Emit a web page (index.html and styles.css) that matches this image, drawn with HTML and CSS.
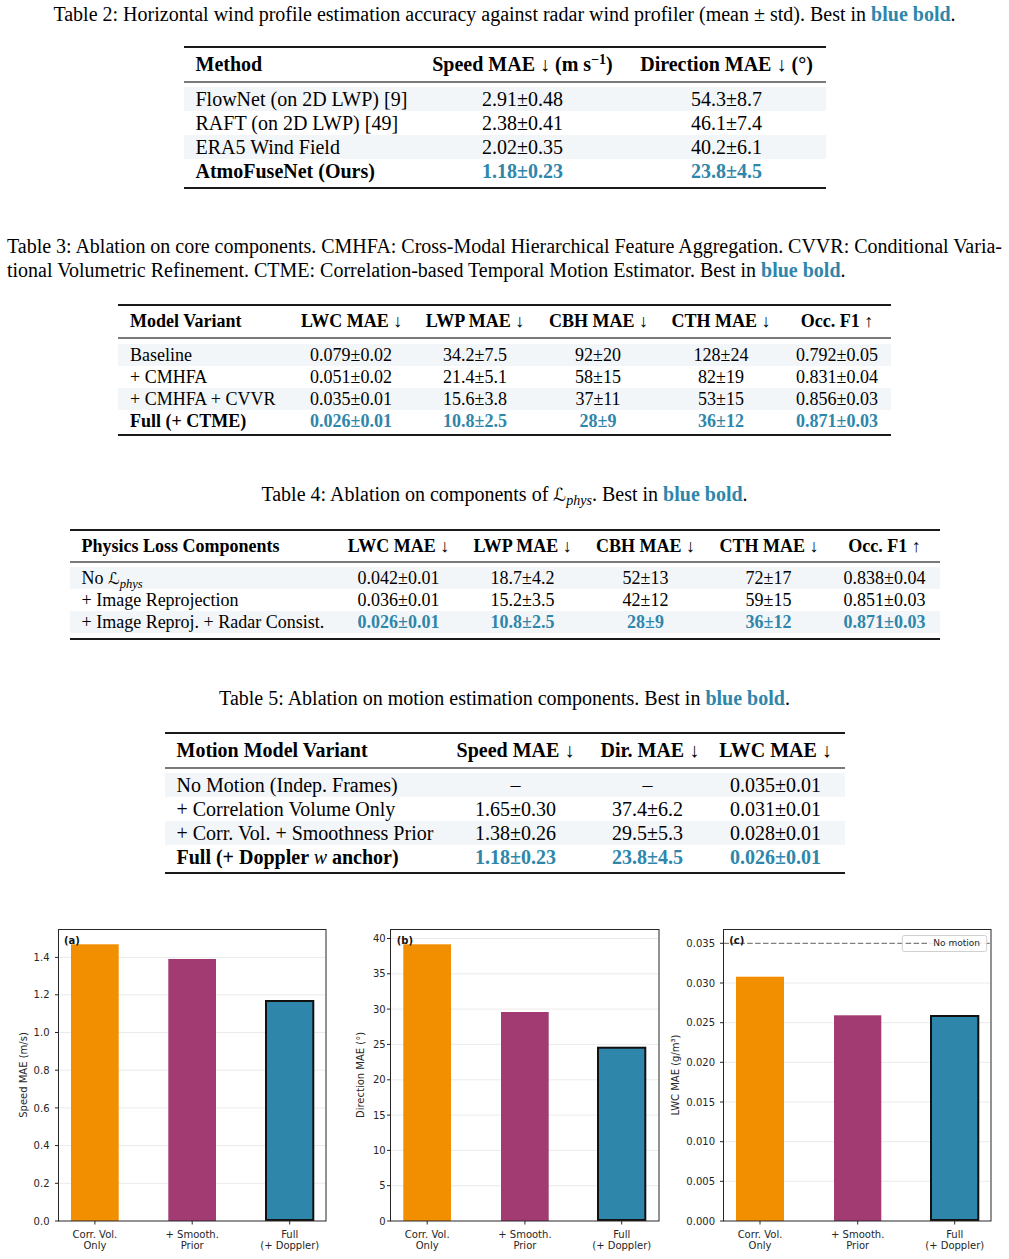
FILE: index.html
```
<!DOCTYPE html>
<html>
	<head>
		<meta charset="utf-8">
		<title>Ablation tables</title>
		<link rel="stylesheet" href="styles.css">
	</head>
	<body>
		<p class="cap center">Table 2: Horizontal wind profile estimation accuracy against radar wind profiler (mean ± std). Best in <b class="blue">blue bold</b>.</p>
		<table class="bt t2">
			<colgroup><col class="w234"><col class="w210"><col class="w198"></colgroup>
			<thead>
				<tr><th>Method</th><th>Speed MAE <span class="ar">↓</span> (m s<sup>−1</sup>)</th><th>Direction MAE <span class="ar">↓</span> (°)</th></tr>
			</thead>
			<tbody>
				<tr><td>FlowNet (on 2D LWP) [9]</td><td>2.91±0.48</td><td>54.3±8.7</td></tr>
				<tr><td>RAFT (on 2D LWP) [49]</td><td>2.38±0.41</td><td>46.1±7.4</td></tr>
				<tr><td>ERA5 Wind Field</td><td>2.02±0.35</td><td>40.2±6.1</td></tr>
				<tr><td><b>AtmoFuseNet (Ours)</b></td><td class="hi">1.18±0.23</td><td class="hi">23.8±4.5</td></tr>
			</tbody>
		</table>

		<p class="cap just c3"><span class="jl">Table 3: Ablation on core components. CMHFA: Cross-Modal Hierarchical Feature Aggregation. CVVR: Conditional Varia-</span>tional Volumetric Refinement. CTME: Correlation-based Temporal Motion Estimator. Best in <b class="blue">blue bold</b>.</p>
		<table class="bt t3">
			<colgroup><col class="w171"><col class="w124"><col class="w124"><col class="w122"><col class="w124"><col class="w108"></colgroup>
			<thead>
				<tr><th>Model Variant</th><th>LWC MAE <span class="ar">↓</span></th><th>LWP MAE <span class="ar">↓</span></th><th>CBH MAE <span class="ar">↓</span></th><th>CTH MAE <span class="ar">↓</span></th><th>Occ. F1 <span class="ar">↑</span></th></tr>
			</thead>
			<tbody>
				<tr><td>Baseline</td><td>0.079±0.02</td><td>34.2±7.5</td><td>92±20</td><td>128±24</td><td>0.792±0.05</td></tr>
				<tr><td>+ CMHFA</td><td>0.051±0.02</td><td>21.4±5.1</td><td>58±15</td><td>82±19</td><td>0.831±0.04</td></tr>
				<tr><td>+ CMHFA + CVVR</td><td>0.035±0.01</td><td>15.6±3.8</td><td>37±11</td><td>53±15</td><td>0.856±0.03</td></tr>
				<tr><td><b>Full (+ CTME)</b></td><td class="hi">0.026±0.01</td><td class="hi">10.8±2.5</td><td class="hi">28±9</td><td class="hi">36±12</td><td class="hi">0.871±0.03</td></tr>
			</tbody>
		</table>

		<p class="cap center c4">Table 4: Ablation on components of <span class="scr">ℒ</span><sub>phys</sub>. Best in <b class="blue">blue bold</b>.</p>
		<table class="bt t4">
			<colgroup><col class="w266"><col class="w126"><col class="w122"><col class="w124"><col class="w122"><col class="w110"></colgroup>
			<thead>
				<tr><th>Physics Loss Components</th><th>LWC MAE <span class="ar">↓</span></th><th>LWP MAE <span class="ar">↓</span></th><th>CBH MAE <span class="ar">↓</span></th><th>CTH MAE <span class="ar">↓</span></th><th>Occ. F1 <span class="ar">↑</span></th></tr>
			</thead>
			<tbody>
				<tr><td>No <span class="scr">ℒ</span><sub>phys</sub></td><td>0.042±0.01</td><td>18.7±4.2</td><td>52±13</td><td>72±17</td><td>0.838±0.04</td></tr>
				<tr><td>+ Image Reprojection</td><td>0.036±0.01</td><td>15.2±3.5</td><td>42±12</td><td>59±15</td><td>0.851±0.03</td></tr>
				<tr><td>+ Image Reproj. + Radar Consist.</td><td class="hi">0.026±0.01</td><td class="hi">10.8±2.5</td><td class="hi">28±9</td><td class="hi">36±12</td><td class="hi">0.871±0.03</td></tr>
			</tbody>
		</table>

		<p class="cap center c5">Table 5: Ablation on motion estimation components. Best in <b class="blue">blue bold</b>.</p>
		<table class="bt t5">
			<colgroup><col class="w278"><col class="w146"><col class="w118"><col class="w138"></colgroup>
			<thead>
				<tr><th>Motion Model Variant</th><th>Speed MAE <span class="ar">↓</span></th><th>Dir. MAE <span class="ar">↓</span></th><th>LWC MAE <span class="ar">↓</span></th></tr>
			</thead>
			<tbody>
				<tr><td>No Motion (Indep. Frames)</td><td>–</td><td>–</td><td>0.035±0.01</td></tr>
				<tr><td>+ Correlation Volume Only</td><td>1.65±0.30</td><td>37.4±6.2</td><td>0.031±0.01</td></tr>
				<tr><td>+ Corr. Vol. + Smoothness Prior</td><td>1.38±0.26</td><td>29.5±5.3</td><td>0.028±0.01</td></tr>
				<tr><td><b>Full (+ Doppler <i class="mi">w</i> anchor)</b></td><td class="hi">1.18±0.23</td><td class="hi">23.8±4.5</td><td class="hi">0.026±0.01</td></tr>
			</tbody>
		</table>

		<div class="figs">
			<!-- (a) speed -->
			<svg class="panel pa" width="332" height="338" viewBox="0 0 332 338">
				<g class="grid">
					<line x1="58.5" x2="326" y1="263.3" y2="263.3"/>
					<line x1="58.5" x2="326" y1="225.6" y2="225.6"/>
					<line x1="58.5" x2="326" y1="187.9" y2="187.9"/>
					<line x1="58.5" x2="326" y1="150.2" y2="150.2"/>
					<line x1="58.5" x2="326" y1="112.5" y2="112.5"/>
					<line x1="58.5" x2="326" y1="74.8" y2="74.8"/>
					<line x1="58.5" x2="326" y1="37.4" y2="37.4"/>
				</g>
				<rect class="b1" x="71" y="24.3" width="47.7" height="276.7"/>
				<rect class="b2" x="168.3" y="39" width="47.7" height="262"/>
				<rect class="b3" x="266" y="81" width="47.3" height="219"/>
				<rect class="spine" x="58.5" y="9.5" width="267.5" height="291.5"/>
				<g class="tick">
					<line x1="55" x2="58.5" y1="301" y2="301"/>
					<line x1="55" x2="58.5" y1="263.3" y2="263.3"/>
					<line x1="55" x2="58.5" y1="225.6" y2="225.6"/>
					<line x1="55" x2="58.5" y1="187.9" y2="187.9"/>
					<line x1="55" x2="58.5" y1="150.2" y2="150.2"/>
					<line x1="55" x2="58.5" y1="112.5" y2="112.5"/>
					<line x1="55" x2="58.5" y1="74.8" y2="74.8"/>
					<line x1="55" x2="58.5" y1="37.4" y2="37.4"/>
					<line x1="94.9" x2="94.9" y1="301" y2="304.5"/>
					<line x1="192.2" x2="192.2" y1="301" y2="304.5"/>
					<line x1="289.7" x2="289.7" y1="301" y2="304.5"/>
				</g>
				<g class="ylab">
					<text x="49.5" y="304.6">0.0</text>
					<text x="49.5" y="266.9">0.2</text>
					<text x="49.5" y="229.2">0.4</text>
					<text x="49.5" y="191.5">0.6</text>
					<text x="49.5" y="153.8">0.8</text>
					<text x="49.5" y="116.1">1.0</text>
					<text x="49.5" y="78.4">1.2</text>
					<text x="49.5" y="41">1.4</text>
				</g>
				<g class="xlab">
					<text x="94.9" y="317.7">Corr. Vol.</text><text x="94.9" y="329.3">Only</text>
					<text x="192.2" y="317.7">+ Smooth.</text><text x="192.2" y="329.3">Prior</text>
					<text x="289.7" y="317.7">Full</text><text x="289.7" y="329.3">(+ Doppler)</text>
				</g>
				<text class="axt" transform="translate(23.5 155) rotate(-90)">Speed MAE (m/s)</text>
				<text class="tag" x="64" y="24">(a)</text>
			</svg>
			<!-- (b) direction -->
			<svg class="panel pb" width="334" height="338" viewBox="0 0 334 338">
				<g class="grid">
					<line x1="58.5" x2="327" y1="265.7" y2="265.7"/>
					<line x1="58.5" x2="327" y1="230.4" y2="230.4"/>
					<line x1="58.5" x2="327" y1="195.1" y2="195.1"/>
					<line x1="58.5" x2="327" y1="159.8" y2="159.8"/>
					<line x1="58.5" x2="327" y1="124.4" y2="124.4"/>
					<line x1="58.5" x2="327" y1="89.1" y2="89.1"/>
					<line x1="58.5" x2="327" y1="53.8" y2="53.8"/>
					<line x1="58.5" x2="327" y1="18.5" y2="18.5"/>
				</g>
				<rect class="b1" x="71.3" y="24.3" width="47.7" height="276.7"/>
				<rect class="b2" x="169" y="92" width="47.7" height="209"/>
				<rect class="b3" x="266" y="127.7" width="47.3" height="172.3"/>
				<rect class="spine" x="58.5" y="9.5" width="268.5" height="291.5"/>
				<g class="tick">
					<line x1="55" x2="58.5" y1="301" y2="301"/>
					<line x1="55" x2="58.5" y1="265.7" y2="265.7"/>
					<line x1="55" x2="58.5" y1="230.4" y2="230.4"/>
					<line x1="55" x2="58.5" y1="195.1" y2="195.1"/>
					<line x1="55" x2="58.5" y1="159.8" y2="159.8"/>
					<line x1="55" x2="58.5" y1="124.4" y2="124.4"/>
					<line x1="55" x2="58.5" y1="89.1" y2="89.1"/>
					<line x1="55" x2="58.5" y1="53.8" y2="53.8"/>
					<line x1="55" x2="58.5" y1="18.5" y2="18.5"/>
					<line x1="95.2" x2="95.2" y1="301" y2="304.5"/>
					<line x1="192.9" x2="192.9" y1="301" y2="304.5"/>
					<line x1="289.7" x2="289.7" y1="301" y2="304.5"/>
				</g>
				<g class="ylab">
					<text x="53.7" y="304.6">0</text>
					<text x="53.7" y="269.3">5</text>
					<text x="53.7" y="234">10</text>
					<text x="53.7" y="198.7">15</text>
					<text x="53.7" y="163.4">20</text>
					<text x="53.7" y="128">25</text>
					<text x="53.7" y="92.7">30</text>
					<text x="53.7" y="57.4">35</text>
					<text x="53.7" y="22.1">40</text>
				</g>
				<g class="xlab">
					<text x="95.2" y="317.7">Corr. Vol.</text><text x="95.2" y="329.3">Only</text>
					<text x="192.9" y="317.7">+ Smooth.</text><text x="192.9" y="329.3">Prior</text>
					<text x="289.7" y="317.7">Full</text><text x="289.7" y="329.3">(+ Doppler)</text>
				</g>
				<text class="axt" transform="translate(28 155) rotate(-90)">Direction MAE (°)</text>
				<text class="tag" x="64.7" y="24">(b)</text>
			</svg>
			<!-- (c) lwc -->
			<svg class="panel pc" width="343" height="338" viewBox="0 0 343 338">
				<g class="grid">
					<line x1="57.5" x2="325" y1="261.3" y2="261.3"/>
					<line x1="57.5" x2="325" y1="221.7" y2="221.7"/>
					<line x1="57.5" x2="325" y1="182" y2="182"/>
					<line x1="57.5" x2="325" y1="142.3" y2="142.3"/>
					<line x1="57.5" x2="325" y1="102.7" y2="102.7"/>
					<line x1="57.5" x2="325" y1="63" y2="63"/>
				</g>
				<rect class="b1" x="70" y="56.7" width="48" height="244.3"/>
				<rect class="b2" x="168" y="95.3" width="47.3" height="205.7"/>
				<rect class="b3" x="265" y="96" width="47.3" height="204"/>
				<line class="ref" x1="57.5" x2="325" y1="23.3" y2="23.3"/>
				<rect class="spine" x="57.5" y="9.5" width="267.5" height="291.5"/>
				<g class="tick">
					<line x1="54" x2="57.5" y1="301" y2="301"/>
					<line x1="54" x2="57.5" y1="261.3" y2="261.3"/>
					<line x1="54" x2="57.5" y1="221.7" y2="221.7"/>
					<line x1="54" x2="57.5" y1="182" y2="182"/>
					<line x1="54" x2="57.5" y1="142.3" y2="142.3"/>
					<line x1="54" x2="57.5" y1="102.7" y2="102.7"/>
					<line x1="54" x2="57.5" y1="63" y2="63"/>
					<line x1="54" x2="57.5" y1="23.3" y2="23.3"/>
					<line x1="94" x2="94" y1="301" y2="304.5"/>
					<line x1="191.7" x2="191.7" y1="301" y2="304.5"/>
					<line x1="288.7" x2="288.7" y1="301" y2="304.5"/>
				</g>
				<g class="ylab">
					<text x="49" y="304.6">0.000</text>
					<text x="49" y="264.9">0.005</text>
					<text x="49" y="225.3">0.010</text>
					<text x="49" y="185.6">0.015</text>
					<text x="49" y="145.9">0.020</text>
					<text x="49" y="106.3">0.025</text>
					<text x="49" y="66.6">0.030</text>
					<text x="49" y="26.9">0.035</text>
				</g>
				<g class="xlab">
					<text x="94" y="317.7">Corr. Vol.</text><text x="94" y="329.3">Only</text>
					<text x="191.7" y="317.7">+ Smooth.</text><text x="191.7" y="329.3">Prior</text>
					<text x="288.7" y="317.7">Full</text><text x="288.7" y="329.3">(+ Doppler)</text>
				</g>
				<text class="axt" transform="translate(9.5 155) rotate(-90)">LWC MAE (g/m³)</text>
				<text class="tag" x="63.3" y="24">(c)</text>
				<rect class="legend" x="236.3" y="15.5" width="84.4" height="16" rx="2"/>
				<line class="ref" x1="239.7" x2="262.3" y1="23.3" y2="23.3"/>
				<text class="legt" x="267.3" y="26.4">No motion</text>
			</svg>
		</div>
	</body>
</html>
```

FILE: styles.css
```
*{
	margin: 0;
	padding: 0;
	box-sizing: border-box;
}
body{
	width: 1009px;
	padding: 2px 7px 0;
	font-family: "Liberation Serif", "Times New Roman", serif;
	font-size: 20px;
	color: #000;
	background: #fff;
}
.cap{
	line-height: 24px;
}
.cap.center{
	text-align: center;
}
.cap.just{
	text-align: left;
}
.jl{
	display: block;
	white-space: nowrap;
	word-spacing: -3px;
	text-align: justify;
	text-align-last: justify;
}
.blue{
	color: #2e86ab;
	font-weight: bold;
}
.scr{
	font-family: "DejaVu Serif", "DejaVu Sans", serif;
	font-style: italic;
	font-size: 0.9em;
	line-height: 0;
}
sub{
	font-style: italic;
	font-size: 0.7em;
	vertical-align: -0.3em;
	line-height: 0;
}
sup{
	font-size: 0.7em;
	vertical-align: 0.5em;
	line-height: 0;
}
.mi{
	font-weight: normal;
	font-style: italic;
}
.c3{ margin-top: 45px; }
.c4{ margin-top: 46px; }
.c5{ margin-top: 46px; }

/* booktabs style tables */
.bt{
	border-collapse: separate;
	border-spacing: 0;
	table-layout: fixed;
	margin: 20px auto 0;
	border-top: 2px solid #1a1a1a;
	border-bottom: 2px solid #1a1a1a;
}
.bt th,
.bt td{
	padding: 0 12px;
	text-align: center;
	white-space: nowrap;
}
.bt th:first-child,
.bt td:first-child{
	text-align: left;
}
.bt th{
	font-weight: bold;
	border-bottom: 2px solid #7a7a7a;
}
.ar{
	font-weight: normal;
}
.bt tbody tr:nth-child(odd) td{
	background: #f3f6f9;
}
.bt tbody tr:first-child td{
	border-top: 4px solid #fff;
}
.bt tbody tr:last-child td{
	border-bottom: 4px solid #fff;
}
.bt td.hi{
	color: #2e86ab;
	font-weight: bold;
}

.t2{ width: 642px; }
.t2 th{ line-height: 33px; }
.t2 td{ line-height: 24px; }

.t3{ width: 773px; font-size: 18px; margin-top: 22px; }
.t3 th{ line-height: 31px; }
.t3 td{ line-height: 22px; }
.t3 tbody tr:first-child td{ border-top-width: 5px; }
.t3 tbody tr:last-child td{ border-bottom-width: 2px; }

.t4{ width: 870px; font-size: 18px; margin-top: 23px; }
.t4 th{ line-height: 30px; }
.t4 td{ line-height: 22px; }
.t4 tbody tr:last-child td{ border-bottom-width: 5px; }

.t5{ width: 680px; margin-top: 22px; }
.t5 th{ line-height: 33px; }
.t5 td{ line-height: 24px; }
.t5 tbody tr:last-child td{ border-bottom-width: 3px; }

.w108{ width: 108px; } .w110{ width: 110px; } .w118{ width: 118px; }
.w122{ width: 122px; } .w124{ width: 124px; } .w126{ width: 126px; }
.w138{ width: 138px; } .w146{ width: 146px; } .w171{ width: 171px; }
.w198{ width: 198px; } .w210{ width: 210px; } .w234{ width: 234px; }
.w266{ width: 266px; } .w278{ width: 278px; }

/* bar charts */
.figs{
	display: flex;
	margin: 46px -7px 0;
}
.panel{
	display: block;
	font-family: "DejaVu Sans", sans-serif;
}
.grid line{
	stroke: #ebebeb;
	stroke-width: 1;
}
.b1{ fill: #f18f01; }
.b2{ fill: #a23b72; }
.b3{
	fill: #2e86ab;
	stroke: #111;
	stroke-width: 2;
}
.spine{
	fill: none;
	stroke: #262626;
	stroke-width: 1;
}
.tick line{
	stroke: #262626;
	stroke-width: 1;
}
.ylab text{
	font-size: 10px;
	fill: #262626;
	text-anchor: end;
}
.xlab text{
	font-size: 10px;
	fill: #262626;
	text-anchor: middle;
}
.axt{
	font-size: 10px;
	fill: #262626;
	text-anchor: middle;
	dominant-baseline: central;
}
.tag{
	font-size: 10px;
	font-weight: bold;
	fill: #111;
}
.ref{
	stroke: #808080;
	stroke-width: 1.3;
	stroke-dasharray: 5.5 2.4;
}
.legend{
	fill: #fff;
	fill-opacity: 0.85;
	stroke: #d0d0d0;
	stroke-width: 1;
}
.legt{
	font-size: 9px;
	fill: #262626;
}
```
